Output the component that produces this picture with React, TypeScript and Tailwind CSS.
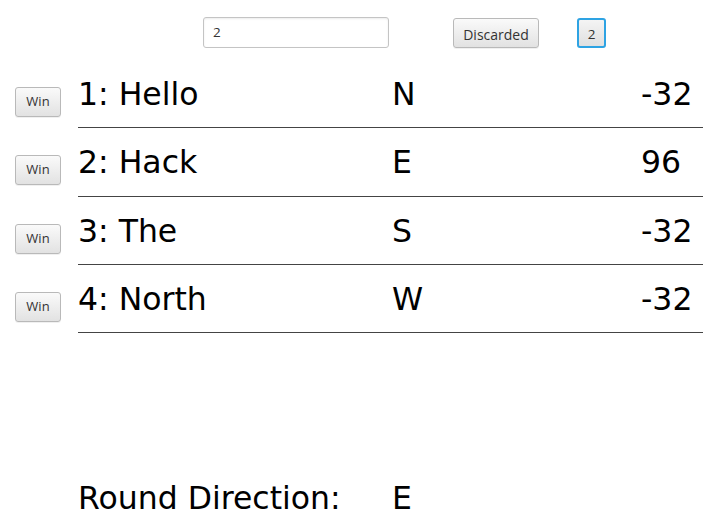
const rows = [
  { name: "1: Hello", dir: "N", score: "-32" },
  { name: "2: Hack", dir: "E", score: "96" },
  { name: "3: The", dir: "S", score: "-32" },
  { name: "4: North", dir: "W", score: "-32" },
];

const btn =
  "rounded-[3px] border border-[#b9b9b9] bg-gradient-to-b from-[#fafafa] to-[#e2e2e2] text-[#333] shadow-[0_1px_0_rgba(0,0,0,0.06)] flex items-center justify-center";

function WinButton() {
  return <button className={`${btn} w-[46px] h-[30px] mt-[27px] shrink-0 text-[13px]`}>Win</button>;
}

export default function App() {
  return (
    <div className="w-[725px] h-[530px] bg-white text-black font-['Open_Sans','Noto_Sans',sans-serif]">
      <div className="flex items-start h-[60px] pt-[17px]">
        <div className="ml-[203px] w-[186px] h-[31px] rounded-[3px] border border-[#c4c4c4] bg-white shadow-[inset_0_1px_2px_rgba(0,0,0,0.08)] flex items-center pl-[9px] text-[13.5px] text-[#333]">
          2
        </div>
        <button className={`${btn} ml-[64px] mt-px w-[86px] h-[30px] text-[14px] pt-[2px]`}>Discarded</button>
        <button className="ml-[38px] mt-px w-[29px] h-[30px] rounded-[3px] border-2 border-[#2ea3e3] bg-gradient-to-b from-[#f4f4f4] to-[#e0e0e0] text-[13.5px] text-[#333] flex items-center justify-center pt-[2px]">
          2
        </button>
      </div>

      {rows.map((r, i) => (
        <div key={r.name} className="flex items-start pl-[15px]">
          <WinButton />
          <div
            className={`ml-[17px] w-[625px] flex pt-[16px] ${i === 1 ? "pb-[16px]" : "pb-[15px]"} border-b border-[#444] font-['DejaVu_Sans',sans-serif] text-[31.5px] leading-[36px]`}
          >
            <span className="w-[314px]">{r.name}</span>
            <span className="w-[249px]">{r.dir}</span>
            <span>{r.score}</span>
          </div>
        </div>
      ))}

      <div className="flex pl-[78px] mt-[147px] font-['DejaVu_Sans',sans-serif] text-[31.5px] leading-[36px]">
        <span className="w-[314px]">Round Direction:</span>
        <span>E</span>
      </div>
    </div>
  );
}
